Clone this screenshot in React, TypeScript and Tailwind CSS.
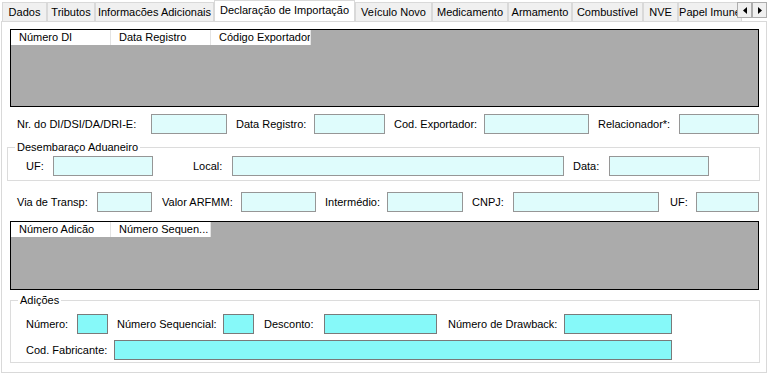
const tabs = [
  { label: "Dados", w: "w-[45px]" },
  { label: "Tributos", w: "w-[48px]" },
  { label: "Informacões Adicionais", w: "w-[119px]" },
  { label: "Declaração de Importação", w: "w-[141px]", active: true },
  { label: "Veículo Novo", w: "w-[77px]" },
  { label: "Medicamento", w: "w-[76px]" },
  { label: "Armamento", w: "w-[64px]" },
  { label: "Combustível", w: "w-[71px]" },
  { label: "NVE", w: "w-[35px]" },
  { label: "Papel Imune", w: "w-[64px]" },
];

type Field = { label: string; lab: string; box: string; bright?: boolean };

const row1: Field[] = [
  { label: "Nr. do DI/DSI/DA/DRI-E:", lab: "ml-[15px] w-[134px]", box: "w-[76px]" },
  { label: "Data Registro:", lab: "ml-[9px] w-[78px]", box: "w-[71px]" },
  { label: "Cod. Exportador:", lab: "ml-[9px] w-[90px]", box: "w-[105px]" },
  { label: "Relacionador*:", lab: "ml-[9px] w-[81px]", box: "w-[80px]" },
];

const desembaraco: Field[] = [
  { label: "UF:", lab: "ml-[18px] w-[27px]", box: "w-[100px]" },
  { label: "Local:", lab: "ml-[40px] w-[39px]", box: "w-[332px]" },
  { label: "Data:", lab: "ml-[9px] w-[36px]", box: "w-[100px]" },
];

const row3: Field[] = [
  { label: "Via de Transp:", lab: "ml-[15px] w-[80px]", box: "w-[55px]" },
  { label: "Valor ARFMM:", lab: "ml-[10px] w-[79px]", box: "w-[75px]" },
  { label: "Intermédio:", lab: "ml-[9px] w-[62px]", box: "w-[76px]" },
  { label: "CNPJ:", lab: "ml-[9px] w-[41px]", box: "w-[146px]" },
  { label: "UF:", lab: "ml-[11px] w-[26px]", box: "w-[63px]" },
];

const adicoesA: Field[] = [
  { label: "Número:", lab: "ml-[15px] w-[51px]", box: "w-[31px]", bright: true },
  { label: "Número Sequencial:", lab: "ml-[9px] w-[106px]", box: "w-[31px]", bright: true },
  { label: "Desconto:", lab: "ml-[10px] w-[60px]", box: "w-[113px]", bright: true },
  { label: "Número de Drawback:", lab: "ml-[11px] w-[116px]", box: "w-[108px]", bright: true },
];

const adicoesB: Field[] = [
  { label: "Cod. Fabricante:", lab: "ml-[15px] w-[88px]", box: "w-[558px]", bright: true },
];

function FieldRow({ fields, className = "" }: { fields: Field[]; className?: string }) {
  return (
    <div className={`flex h-[20px] items-center ${className}`}>
      {fields.map((f) => (
        <div key={f.label} className="flex items-center">
          <span className={`${f.lab} whitespace-nowrap`}>{f.label}</span>
          <div
            className={`h-[20px] ${f.box} border ${
              f.bright ? "border-[#7a7a7a] bg-[#86f9f9]" : "border-[#969696] bg-[#dffcfc]"
            }`}
          />
        </div>
      ))}
    </div>
  );
}

function Grid({ cols, className = "" }: { cols: string[]; className?: string }) {
  return (
    <div className={`border border-black bg-[#ababab] ${className}`}>
      <div className="flex h-[15px]">
        {cols.map((c) => (
          <div
            key={c}
            className="w-[100px] overflow-hidden whitespace-nowrap border-r border-[#e3e3e3] bg-white pl-[8px] leading-[15px]"
          >
            {c}
          </div>
        ))}
      </div>
    </div>
  );
}

function Arrow({ dir }: { dir: "left" | "right" }) {
  return (
    <div className="flex h-[16px] w-[15px] items-center justify-center border border-[#adadad] bg-[#f0f0f0]">
      <svg width="4" height="7" viewBox="0 0 4 7">
        {dir === "left" ? <path d="M4 0 L0 3.5 L4 7 Z" fill="#000" /> : <path d="M0 0 L4 3.5 L0 7 Z" fill="#000" />}
      </svg>
    </div>
  );
}

export default function App() {
  return (
    <div
      className="relative h-[378px] w-[771px] overflow-hidden bg-white text-[11px] text-black"
      style={{ fontFamily: '"Liberation Sans", Arial, sans-serif' }}
    >
      <div className="flex h-[21px] items-end overflow-hidden pl-[2px] pr-[34px]">
        {tabs.map((t) =>
          t.active ? (
            <div
              key={t.label}
              className={`relative z-10 -mb-px flex h-[22px] shrink-0 ${t.w} items-center justify-center whitespace-nowrap border border-b-0 border-[#d9d9d9] bg-white pb-[2px]`}
            >
              {t.label}
            </div>
          ) : (
            <div
              key={t.label}
              className={`flex h-[19px] shrink-0 ${t.w} items-center justify-center overflow-hidden whitespace-nowrap border border-b-0 border-[#d9d9d9] bg-[#f0f0f0]`}
            >
              {t.label}
            </div>
          )
        )}
      </div>
      <div className="absolute left-[737px] top-[2px] flex bg-white">
        <Arrow dir="left" />
        <Arrow dir="right" />
      </div>

      <div className="ml-px flex h-[352px] w-[766px] flex-col border border-[#d9d9d9] bg-white">
        <Grid cols={["Número DI", "Data Registro", "Código Exportador"]} className="ml-[8px] mt-[7px] h-[78px] w-[749px]" />

        <FieldRow fields={row1} className="mt-[7px]" />

        <fieldset className="ml-[5px] mt-[6px] w-[753px] border border-[#dcdcdc] pb-[4px]">
          <legend className="ml-[7px] px-[2px] leading-[14px]">Desembaraço Aduaneiro</legend>
          <FieldRow fields={desembaraco} className="mt-[2px]" />
        </fieldset>

        <FieldRow fields={row3} className="mt-[11px]" />

        <Grid cols={["Número Adicão", "Número Sequen..."]} className="ml-[8px] mt-[9px] h-[69px] w-[749px]" />

        <fieldset className="ml-[8px] mt-[3px] w-[750px] border border-[#dcdcdc] pb-[2px]">
          <legend className="ml-[7px] px-[2px] leading-[14px]">Adições</legend>
          <FieldRow fields={adicoesA} className="mt-[7px]" />
          <FieldRow fields={adicoesB} className="mt-[6px]" />
        </fieldset>
      </div>
    </div>
  );
}
